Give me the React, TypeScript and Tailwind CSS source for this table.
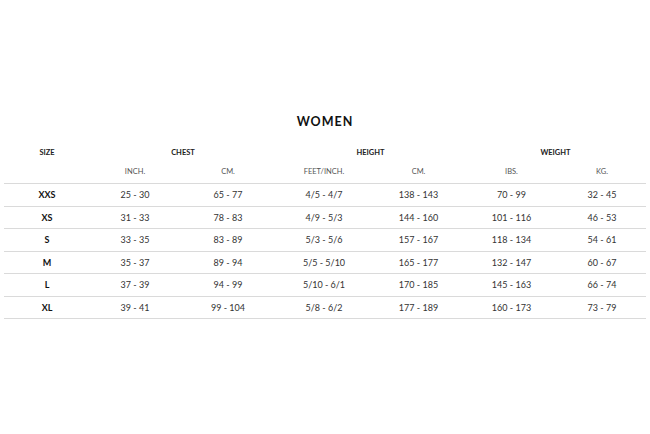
const cols = "grid grid-cols-[86px_90px_96px_96px_93px_93px_88px]";

const rows = [
  { size: "XXS", vals: ["25 - 30", "65 - 77", "4/5 - 4/7", "138 - 143", "70 - 99", "32 - 45"] },
  { size: "XS", vals: ["31 - 33", "78 - 83", "4/9 - 5/3", "144 - 160", "101 - 116", "46 - 53"] },
  { size: "S", vals: ["33 - 35", "83 - 89", "5/3 - 5/6", "157 - 167", "118 - 134", "54 - 61"] },
  { size: "M", vals: ["35 - 37", "89 - 94", "5/5 - 5/10", "165 - 177", "132 - 147", "60 - 67"] },
  { size: "L", vals: ["37 - 39", "94 - 99", "5/10 - 6/1", "170 - 185", "145 - 163", "66 - 74"] },
  { size: "XL", vals: ["39 - 41", "99 - 104", "5/8 - 6/2", "177 - 189", "160 - 173", "73 - 79"] },
];

const units = ["INCH.", "CM.", "FEET/INCH.", "CM.", "IBS.", "KG."];

export default function App() {
  return (
    <div className="h-[434px] w-[650px] bg-white px-[4px] pt-[114px] font-['Lato','Liberation_Sans',sans-serif] text-[#222]">
      <h1 className="h-[16px] text-center text-[12.5px] font-bold leading-[16px] tracking-[1px] text-[#111]">
        WOMEN
      </h1>

      {/* group headers */}
      <div className={`${cols} mt-[14px] h-[17px] items-center text-[7.5px] font-bold text-[#222]`}>
        <div className="text-center">SIZE</div>
        <div className="col-span-2 text-center">CHEST</div>
        <div className="col-span-2 text-center">HEIGHT</div>
        <div className="col-span-2 text-center">WEIGHT</div>
      </div>

      {/* units */}
      <div className={`${cols} h-[22px] items-center text-[7.5px] text-[#555]`}>
        <div />
        {units.map((u, i) => (
          <div key={i} className="text-center">
            {u}
          </div>
        ))}
      </div>

      <div className="border-t-[1.5px] border-[#dadada]">
        {rows.map((r) => (
          <div
            key={r.size}
            className={`${cols} h-[22.5px] items-center border-b-[1.5px] border-[#dadada] text-[9px] text-[#333]`}
          >
            <div className="text-center font-bold text-[#111]">{r.size}</div>
            {r.vals.map((v, i) => (
              <div key={i} className="text-center">
                {v}
              </div>
            ))}
          </div>
        ))}
      </div>
    </div>
  );
}
